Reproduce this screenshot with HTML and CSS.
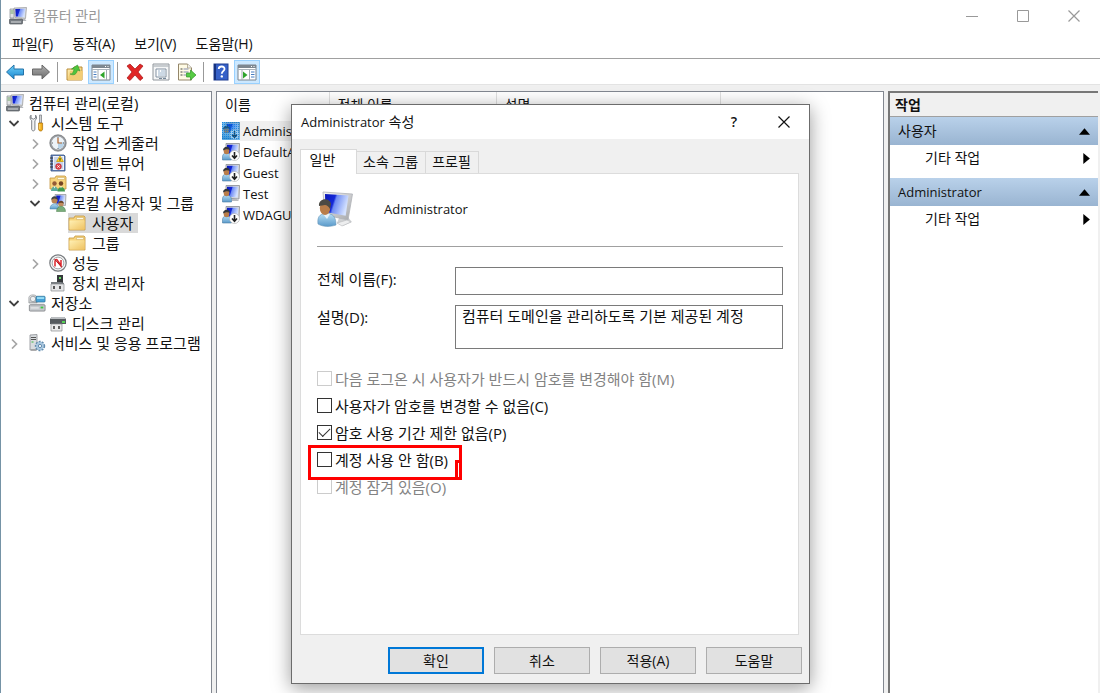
FILE: index.html
```html
<!DOCTYPE html>
<html lang="ko">
<head>
<meta charset="utf-8">
<title>컴퓨터 관리</title>
<link rel="stylesheet" href="styles.css">
</head>
<body>
<svg class="sprite" aria-hidden="true">
  <defs>
    <linearGradient id="gScreen" x1="0" y1="0" x2="1" y2="0.3"><stop offset="0" stop-color="#0a18b8"/><stop offset="0.42" stop-color="#1428d8"/><stop offset="0.5" stop-color="#6f8cf4"/><stop offset="1" stop-color="#d4e2ff"/></linearGradient>
    <linearGradient id="gBlue" x1="0" y1="0" x2="0" y2="1"><stop offset="0" stop-color="#6fd0f8"/><stop offset="1" stop-color="#1686d0"/></linearGradient>
    <linearGradient id="gGray" x1="0" y1="0" x2="0" y2="1"><stop offset="0" stop-color="#b0b0b0"/><stop offset="1" stop-color="#6c6c6c"/></linearGradient>
    <linearGradient id="gFolder" x1="0" y1="0" x2="1" y2="1"><stop offset="0" stop-color="#fff0b4"/><stop offset="1" stop-color="#efc262"/></linearGradient>
    <linearGradient id="gShirt" x1="0" y1="0" x2="0" y2="1"><stop offset="0" stop-color="#b4dcf4"/><stop offset="1" stop-color="#5a9aca"/></linearGradient>
    <linearGradient id="gMetal" x1="0" y1="0" x2="1" y2="1"><stop offset="0" stop-color="#f6f6f6"/><stop offset="1" stop-color="#a4a6aa"/></linearGradient>
  </defs>
  <symbol id="computer" viewBox="0 0 18 18">
    <path d="M1 2h4v9H1z" fill="#dfe1e4" stroke="#85898f" stroke-width=".7"/><path d="M1.500 4h3M1.500 6h3" stroke="#75a86a"/>
    <path d="M5 1l12.500-.5-1 11L6 10.500z" fill="#d5d9df" stroke="#888" stroke-width=".6"/><path d="M6.300 2l10-.3-.8 8.600-8.700-.7z" fill="url(#gScreen)"/>
    <path d="M12 12h4l1.500 2h-5z" fill="#b5b8bc"/><rect x=".5" y="12" width="13" height="5" rx=".7" fill="#777d83" stroke="#42474b" stroke-width=".6"/><path d="M3 14v2M5 14v2M7 14v2M9 14v2M11 14v2" stroke="#e4e6e8" stroke-width=".9"/>
  </symbol>
  <symbol id="tools" viewBox="0 0 16 18">
    <path d="M2 1.200C.6 2.400.7 5.500 2.700 6.500v8.500c0 2.500 3.200 2.500 3.200 0V6.500C8 5.500 8 2.500 6.600 1.200V4L4.300 5.200 2 4z" fill="#f2f3f4" stroke="#6f7479" stroke-width=".9"/>
    <path d="M10.500 1h2v8h-2z" fill="#d0d3d6" stroke="#73777b" stroke-width=".7"/><path d="M9.600 9h4v6c0 2.700-4 2.700-4 0z" fill="#f3ae1c" stroke="#a96e08" stroke-width=".7"/><path d="M10.800 10v5" stroke="#ffe07a"/>
  </symbol>
  <symbol id="clock" viewBox="0 0 18 18">
    <circle cx="9" cy="9" r="8.200" fill="#9a9da1" stroke="#6b6e72" stroke-width=".7"/><circle cx="9" cy="9" r="6.400" fill="#edf3f8"/><path d="M9 9l6-1A6 6 0 0 1 9 15z" fill="#b9d4e9"/><path d="M9 4v5h4" fill="none" stroke="#b2642a" stroke-width="1.200"/><path d="M9 3v1M9 14v1M3 9h1M14 9h1" stroke="#666"/>
  </symbol>
  <symbol id="event" viewBox="0 0 18 18">
    <path d="M2 1h13l1 1v15H2z" fill="#6a86bf" stroke="#34507f" stroke-width=".8"/><path d="M4 2h11v14H4z" fill="#f0f3fb"/><path d="M5 4h9M5 6h9M5 8h9M5 10h9M5 12h9M5 14h9" stroke="#8fa4d0" stroke-width=".8"/><path d="M1 4h3M1 7h3M1 10h3M1 13h3" stroke="#333"/>
    <path d="M11 2l3.400 5.500H7.600z" fill="#ffdc20" stroke="#c29300" stroke-width=".7"/><path d="M11 4v2M11 6.300v.7" stroke="#222"/><circle cx="9.500" cy="12.500" r="2.900" fill="#e3424a" stroke="#a81820" stroke-width=".5"/><path d="M8.400 11.400l2.200 2.200M10.600 11.400l-2.200 2.200" stroke="#fff"/>
  </symbol>
  <symbol id="folder" viewBox="0 0 18 18">
    <path d="M1 4h5l1-2h9l1 1v13H1z" fill="#f7d47c" stroke="#c4963c" stroke-width=".8"/><path d="M8.500 3.500h7v2h-7z" fill="#fffbe6" stroke="#c9a65a" stroke-width=".5"/><path d="M1.500 6.500h15V15.500h-15z" fill="url(#gFolder)"/>
  </symbol>
  <symbol id="shared" viewBox="0 0 18 18">
    <path d="M1 4h5l1-2h9l1 1v12H1z" fill="#f7d47c" stroke="#c4963c" stroke-width=".8"/><path d="M8.500 3.500h7v2h-7z" fill="#fffbe6" stroke="#c9a65a" stroke-width=".5"/><circle cx="5.500" cy="9.500" r="2.200" fill="#935b37"/><path d="M2 17c0-6 7-6 7 0z" fill="#5cab9a"/><circle cx="12" cy="9.500" r="2.200" fill="#744324"/><path d="M8.500 17.500c0-6 7.500-6 7.500 0z" fill="#3f9a50"/><path d="M4.700 12.500l.8 2 .8-2M11.200 12.500l.8 2 .8-2" fill="#fff"/>
  </symbol>
  <symbol id="users" viewBox="0 0 18 18">
    <path d="M6 .5h11l-.6 11L7 10.500z" fill="#d7d9de" stroke="#8c8f96" stroke-width=".7"/><path d="M7.200 1.600h8.700l-.5 8.600-8-.8z" fill="url(#gScreen)"/><circle cx="5.500" cy="6.500" r="3" fill="#ba8352"/><path d="M2.200 6c0-5 6.600-5 6.600 0-2-2-4-2-6.600 0z" fill="#3d4348"/><path d="M1 15c0-7 9-7 9 0z" fill="url(#gShirt)" stroke="#4780a8" stroke-width=".5"/><circle cx="12" cy="10" r="2.600" fill="#c18c60"/><path d="M9.200 9.800c0-4 5.700-4 5.700 0-2-1.500-3.700-1.500-5.700 0z" fill="#674529"/><path d="M7.500 17.500c0-7 9-7 9 0z" fill="#79ad7b" stroke="#4a7e4d" stroke-width=".5"/>
  </symbol>
  <symbol id="perf" viewBox="0 0 18 18">
    <circle cx="9" cy="9" r="8.200" fill="#f7f7f7" stroke="#777b7f" stroke-width="1.200"/><circle cx="9" cy="9" r="5.900" fill="#fff" stroke="#a0a3a6" stroke-width="1"/><path d="M6 12.500V7.500c0-2 1.500-2.500 2.500-1l3.500 5V6" fill="none" stroke="#dd242a" stroke-width="1.500"/><path d="M5.500 5l7 8" stroke="#b31a20" stroke-width="1"/>
  </symbol>
  <symbol id="device" viewBox="0 0 18 18">
    <path d="M8 1h6v8H8z" fill="#34383a"/><path d="M10 3h2v2h-2z" fill="#69d963"/><path d="M2 8h10l3 1v2H2z" fill="#777c80"/><path d="M2 10h13v7H2z" fill="#e4e5e6" stroke="#8b8e91" stroke-width=".7"/><path d="M5 12v3M11 12v3" stroke="#333" stroke-width="1.600"/>
  </symbol>
  <symbol id="storage" viewBox="0 0 20 20">
    <path d="M1 10V4c0-4 9-4 9 0v6z" fill="url(#gMetal)" stroke="#85898d" stroke-width=".7"/><circle cx="5.500" cy="5.500" r="3" fill="#eef0f1" stroke="#9da1a5"/><rect x="9" y="2.500" width="10" height="6.500" rx="1" fill="#48a2d8" stroke="#266d91" stroke-width=".7"/><path d="M10 3.500h8v2h-8z" fill="#9be0f7"/><path d="M1.500 12.500l2-2h14l2 2z" fill="#d8dadc"/><rect x="1.500" y="12" width="17.500" height="7" rx="1" fill="#c6c9cd" stroke="#73777b" stroke-width=".8"/><path d="M3 15.500h9" stroke="#f4f4f4"/><path d="M14 14h3v2h-3z" fill="#3bc641"/>
  </symbol>
  <symbol id="disk" viewBox="0 0 18 18">
    <path d="M3 3h12l2 2v5H1V5z" fill="#555a5e"/><path d="M3 3h12l2 2H1z" fill="#bbbec1"/><path d="M13 7h3v2h-3z" fill="#55d255"/><path d="M2 10h11v7H2z" fill="#ebebeb" stroke="#8b8e91" stroke-width=".7"/><path d="M5 12v3M10 12v3" stroke="#333" stroke-width="1.500"/>
  </symbol>
  <symbol id="services" viewBox="0 0 18 18">
    <path d="M2 1l7-.5V16H2z" fill="#d9dde0" stroke="#8a8e92" stroke-width=".8"/><path d="M3 3.500h5M3 5.500h5" stroke="#555"/><path d="M3.500 8h2" stroke="#38b740"/><path d="M3 16h5" stroke="#888"/><circle cx="12" cy="12" r="4.200" fill="#b6d1e7" stroke="#638cae" stroke-width="2" stroke-dasharray="1.900 1.100"/><circle cx="12" cy="12" r="3.700" fill="#a9c8e1"/><circle cx="12" cy="12" r="1.600" fill="#fff" stroke="#668cab"/>
  </symbol>
  <symbol id="person" viewBox="0 0 36 36">
    <path d="M22 27l8-2 5 6-9 4-6-3z" fill="#cfd1d3"/><path d="M6 1l29.500 2-4.500 26-23-5z" fill="url(#gMetal)" stroke="#b0b3b7" stroke-width=".8"/><path d="M8 3l23.500 1.500-2.800 20.300L8.500 21z" fill="url(#gScreen)"/><path d="M20 32l10-3 4 2-9 4z" fill="#edeeef" stroke="#b8babd" stroke-width=".6"/>
    <path d="M1 33c-1-7 2-10 6-10h5c5 0 7 5 7 11-6 2-13 2-18-1z" fill="url(#gShirt)" stroke="#6696b9" stroke-width=".6"/><path d="M6 23l4 5 3-5z" fill="#e7f2fa"/><ellipse cx="8" cy="17" rx="5.200" ry="7" fill="#b97d4a"/><path d="M2 15C1 7 13 6 14 13l-1 5c-2-3-3-4-5-4-2 0-4 1-6 1z" fill="#4c4a44"/>
  </symbol>
  <symbol id="user" viewBox="0 0 18 18">
    <path d="M4 .5h13.500L17 14l-13-1z" fill="#d4d6da" stroke="#888c92" stroke-width=".8"/><path d="M5 1.800h11.200l-.5 10.600L5 11.500z" fill="url(#gScreen)"/><path d="M10 14h5l2 2h-7z" fill="#b9bbbe"/>
    <path d="M.5 17c-.6-6 1.500-7 4-7s5.500 1 5 7z" fill="url(#gShirt)" stroke="#4c7ca2" stroke-width=".6"/><ellipse cx="4.500" cy="8" rx="2.800" ry="3.300" fill="#b97d4a"/><path d="M1 7.500c0-4.500 6.500-5 7-.5-2-1-4-1-7 .5z" fill="#33373b"/>
  </symbol>
  <symbol id="userOff" viewBox="0 0 18 18"><use href="#user" width="18" height="18"/><circle cx="12.500" cy="12.500" r="5" fill="#fff" stroke="#aaa" stroke-width=".6"/><path d="M12.500 9v6M10 12.500l2.500 2.800 2.500-2.800" fill="none" stroke="#222" stroke-width="1.600"/></symbol>
  <symbol id="userSel" viewBox="0 0 18 18"><rect width="18" height="18" fill="#b5daf5"/><use href="#userOff" width="18" height="18"/><rect width="18" height="18" fill="#0c86e0" fill-opacity=".4"/><path d="M0 .5h18M0 2.500h18M0 4.500h18M0 6.500h18M0 8.500h18M0 10.500h18M0 12.500h18M0 14.500h18M0 16.500h18" stroke="#0078d7" stroke-dasharray="1 1" stroke-opacity=".7"/></symbol>
  <symbol id="back" viewBox="0 0 20 18"><path d="M1.500 9L9 2v4h9.500v6H9v4z" fill="url(#gBlue)" stroke="#2473a8"/></symbol>
  <symbol id="forward" viewBox="0 0 20 18"><path d="M18.500 9L11 2v4H1.500v6H11v4z" fill="url(#gGray)" stroke="#666"/></symbol>
  <symbol id="up" viewBox="0 0 18 18"><path d="M1 6h6l1-2h8v13H1z" fill="url(#gFolder)" stroke="#b98c39"/><path d="M2 17L4 8h13l-1 9z" fill="#f2cd76"/><path d="M4 11c3 0 3.500-2 4-5H5.500l6-4 2.500 6-2.500-1c-1 4-3 6-7.500 4z" fill="#4fc53d" stroke="#31922a" stroke-width=".6"/></symbol>
  <symbol id="paneLeft" viewBox="0 0 20 18"><path d="M1 2h18v15H1z" fill="#fff" stroke="#7d858e"/><path d="M1 2h18v3H1z" fill="#7d8790"/><path d="M14 3.500h1M16.500 3.500h1" stroke="#fff"/><path d="M1 6.500h18" stroke="#aab3bb"/><path d="M7 7v10M15.500 7v10" stroke="#a4acb3"/><path d="M2.500 9h3M2.500 11.500h3M2.500 14h3" stroke="#477cbf"/><path d="M13.500 8.500v7L9 12z" fill="#2ea52b"/></symbol>
  <symbol id="paneRight" viewBox="0 0 20 18"><path d="M1 2h18v15H1z" fill="#fff" stroke="#7d858e"/><path d="M1 2h18v3H1z" fill="#7d8790"/><path d="M14 3.500h1M16.500 3.500h1" stroke="#fff"/><path d="M1 6.500h18" stroke="#aab3bb"/><path d="M5 7v10M12.500 7v10" stroke="#a4acb3"/><path d="M14 9h3.500M14 11.500h3.500M14 14h3.500" stroke="#477cbf"/><path d="M6 8.500v7l4.500-3.500z" fill="#2ea52b"/></symbol>
  <symbol id="delete" viewBox="0 0 18 18"><path d="M1 3l3-2 5 5 5-5 3 2-5 6 5 6-3 2.500-5-5.500-5 5.500L1 15l5-6z" fill="#e02626" stroke="#a61515" stroke-width=".7"/></symbol>
  <symbol id="props" viewBox="0 0 18 18"><path d="M1 1h16v16H1z" fill="#f5f6f7" stroke="#90969c"/><path d="M1.500 3h15" stroke="#9ba3aa"/><path d="M4 6h10v8H4z" fill="#fff" stroke="#8291a1"/><path d="M6 8h2M9 8h4M6 10h7M6 12h7" stroke="#9ab2ca"/><path d="M7 15.500h3M11 15.500h3" stroke="#789"/></symbol>
  <symbol id="export" viewBox="0 0 19 18"><path d="M1 1h9l4 4v12H1z" fill="#fffbe5" stroke="#94866a"/><path d="M10 1v4h4" fill="#eee" stroke="#94866a" stroke-width=".6"/><path d="M3 6h2M3 9h2M3 12h2" stroke="#444"/><path d="M6 6h5M6 9h5M6 12h3" stroke="#858db0"/><path d="M9 10h4V7l5.500 5-5.500 5v-3H9z" fill="#57cc45" stroke="#2f9629" stroke-width=".7"/></symbol>
  <symbol id="help" viewBox="0 0 16 18"><rect x="1" y="1" width="14" height="16" fill="#3560c8" stroke="#203f92"/><path d="M2 1v16" stroke="#16327e" stroke-width="2"/><path d="M5.700 6c.3-3.500 6.200-3.200 5.800.2-.3 2-2.700 1.900-2.700 4.500" fill="none" stroke="#fff" stroke-width="1.800"/><circle cx="8.800" cy="13.400" r="1.200" fill="#fff"/></symbol>
  <symbol id="open" viewBox="0 0 12 12"><path d="M1.500 4L6 8.500 10.500 4" fill="none" stroke="#404040" stroke-width="1.800"/></symbol>
  <symbol id="closed" viewBox="0 0 12 12"><path d="M4 2.500L8.500 7 4 11.500" fill="none" stroke="#a6a6a6" stroke-width="1.700"/></symbol>
  <symbol id="x" viewBox="0 0 12 12"><path d="M.5.5l11 11M11.500.5l-11 11" fill="none" stroke="currentColor" stroke-width="1.200"/></symbol>
  <symbol id="min" viewBox="0 0 12 12"><path d="M0 6.500h12" stroke="currentColor"/></symbol>
  <symbol id="max" viewBox="0 0 12 12"><path d="M.5.5h11v11H.5z" fill="none" stroke="currentColor"/></symbol>
  <symbol id="triUp" viewBox="0 0 10 10"><path d="M0 8l5-6 5 6z"/></symbol>
  <symbol id="triRight" viewBox="0 0 10 10"><path d="M3 0l6 5-6 5z"/></symbol>
</svg>

<div class="window">
  <header class="titlebar">
    <svg class="icon"><use href="#computer"/></svg>
    <h1 class="title">컴퓨터 관리</h1>
    <div class="captions">
      <button class="caption" aria-label="최소화"><svg><use href="#min"/></svg></button>
      <button class="caption" aria-label="최대화"><svg><use href="#max"/></svg></button>
      <button class="caption" aria-label="닫기"><svg><use href="#x"/></svg></button>
    </div>
  </header>
  <nav class="menubar">
    <button>파일(F)</button><button>동작(A)</button><button>보기(V)</button><button>도움말(H)</button>
  </nav>
  <div class="toolbar" role="toolbar">
    <button aria-label="뒤로"><svg><use href="#back"/></svg></button>
    <button aria-label="앞으로"><svg><use href="#forward"/></svg></button>
    <span class="sep"></span>
    <button aria-label="위로"><svg><use href="#up"/></svg></button>
    <button class="on" aria-label="콘솔 트리"><svg><use href="#paneLeft"/></svg></button>
    <span class="sep"></span>
    <button aria-label="삭제"><svg><use href="#delete"/></svg></button>
    <button aria-label="속성"><svg><use href="#props"/></svg></button>
    <button aria-label="내보내기"><svg><use href="#export"/></svg></button>
    <span class="sep"></span>
    <button aria-label="도움말"><svg><use href="#help"/></svg></button>
    <button class="on" aria-label="작업 창"><svg><use href="#paneRight"/></svg></button>
  </div>

  <main class="panes">
    <ul class="tree" role="tree">
      <li class="node root" role="treeitem"><svg class="icon"><use href="#computer"/></svg>컴퓨터 관리(로컬)</li>
      <li class="node" role="treeitem"><svg class="twist"><use href="#open"/></svg><svg class="icon"><use href="#tools"/></svg>시스템 도구</li>
      <li class="node l2" role="treeitem"><svg class="twist"><use href="#closed"/></svg><svg class="icon"><use href="#clock"/></svg>작업 스케줄러</li>
      <li class="node l2" role="treeitem"><svg class="twist"><use href="#closed"/></svg><svg class="icon"><use href="#event"/></svg>이벤트 뷰어</li>
      <li class="node l2" role="treeitem"><svg class="twist"><use href="#closed"/></svg><svg class="icon"><use href="#shared"/></svg>공유 폴더</li>
      <li class="node l2" role="treeitem"><svg class="twist"><use href="#open"/></svg><svg class="icon"><use href="#users"/></svg>로컬 사용자 및 그룹</li>
      <li class="node l3" role="treeitem" aria-selected="true"><span class="leaf picked"><svg class="icon"><use href="#folder"/></svg>사용자</span></li>
      <li class="node l3" role="treeitem"><span class="leaf"><svg class="icon"><use href="#folder"/></svg>그룹</span></li>
      <li class="node l2" role="treeitem"><svg class="twist"><use href="#closed"/></svg><svg class="icon"><use href="#perf"/></svg>성능</li>
      <li class="node l2" role="treeitem"><span class="twist"></span><svg class="icon"><use href="#device"/></svg>장치 관리자</li>
      <li class="node" role="treeitem"><svg class="twist"><use href="#open"/></svg><svg class="icon"><use href="#storage"/></svg>저장소</li>
      <li class="node l2" role="treeitem"><span class="twist"></span><svg class="icon"><use href="#disk"/></svg>디스크 관리</li>
      <li class="node" role="treeitem"><svg class="twist"><use href="#closed"/></svg><svg class="icon"><use href="#services"/></svg>서비스 및 응용 프로그램</li>
    </ul>

    <section class="list">
      <table class="accounts">
        <colgroup><col class="c-name"><col class="c-full"><col class="c-desc"><col></colgroup>
        <thead><tr><th>이름</th><th>전체 이름</th><th>설명</th><th></th></tr></thead>
        <tbody>
          <tr class="current"><td><span class="cell"><svg class="icon"><use href="#userSel"/></svg><span class="name">Administrator</span></span></td><td></td><td></td><td></td></tr>
          <tr><td><span class="cell"><svg class="icon"><use href="#userOff"/></svg><span class="name">DefaultAccount</span></span></td><td></td><td></td><td></td></tr>
          <tr><td><span class="cell"><svg class="icon"><use href="#userOff"/></svg><span class="name">Guest</span></span></td><td></td><td></td><td></td></tr>
          <tr><td><span class="cell"><svg class="icon"><use href="#user"/></svg><span class="name">Test</span></span></td><td></td><td></td><td></td></tr>
          <tr><td><span class="cell"><svg class="icon"><use href="#userOff"/></svg><span class="name">WDAGUtility</span></span></td><td></td><td></td><td></td></tr>
        </tbody>
      </table>
    </section>

    <aside class="actions">
      <h2 class="actions-title">작업</h2>
      <section class="group">
        <button class="group-head">사용자<svg><use href="#triUp"/></svg></button>
        <button class="action">기타 작업<svg><use href="#triRight"/></svg></button>
      </section>
      <section class="group">
        <button class="group-head latin">Administrator<svg><use href="#triUp"/></svg></button>
        <button class="action">기타 작업<svg><use href="#triRight"/></svg></button>
      </section>
    </aside>
  </main>

  <form class="dialog" role="dialog" aria-labelledby="dlg-title" onsubmit="return false">
    <header class="dialog-bar">
      <h2 id="dlg-title" class="dialog-title"><span class="latin">Administrator</span> 속성</h2>
      <button type="button" class="dialog-btn ask" aria-label="도움말">?</button>
      <button type="button" class="dialog-btn" aria-label="닫기"><svg><use href="#x"/></svg></button>
    </header>
    <div class="tabs" role="tablist">
      <button type="button" class="tab active" role="tab" aria-selected="true">일반</button>
      <button type="button" class="tab" role="tab">소속 그룹</button>
      <button type="button" class="tab" role="tab">프로필</button>
    </div>
    <div class="page" role="tabpanel">
      <div class="who"><svg class="avatar"><use href="#person"/></svg><span class="latin">Administrator</span></div>
      <div class="fields">
        <label for="fullname">전체 이름(F):</label>
        <input id="fullname" class="box" type="text">
        <label for="desc">설명(D):</label>
        <textarea id="desc" class="box area">컴퓨터 도메인을 관리하도록 기본 제공된 계정</textarea>
      </div>
      <div class="checks">
        <label class="check off"><input type="checkbox" disabled>다음 로그온 시 사용자가 반드시 암호를 변경해야 함(M)</label>
        <label class="check"><input type="checkbox">사용자가 암호를 변경할 수 없음(C)</label>
        <label class="check"><input type="checkbox" checked>암호 사용 기간 제한 없음(P)</label>
        <label class="check marked"><input type="checkbox">계정 사용 안 함(B)</label>
        <label class="check off"><input type="checkbox" disabled>계정 잠겨 있음(O)</label>
      </div>
    </div>
    <footer class="buttons">
      <button class="push primary">확인</button>
      <button type="button" class="push">취소</button>
      <button type="button" class="push">적용(A)</button>
      <button type="button" class="push">도움말</button>
    </footer>
  </form>
</div>
</body>
</html>
```

FILE: styles.css
```css
*, *::before, *::after { box-sizing: border-box; }
body {
  margin: 0;
  font: 14px/20px "Open Sans", "Noto Sans CJK KR", sans-serif;
  color: #111;
  background: #f0f0f0;
}
button, input, textarea { font: inherit; color: inherit; margin: 0; }
button { border: 0; padding: 0; background: none; }
h1, h2, ul { margin: 0; padding: 0; font: inherit; }
.sprite { position: absolute; width: 0; height: 0; }
.icon { width: 18px; height: 18px; flex: none; }
.latin { font-size: 13px; }

.window {
  position: relative;
  display: flex;
  flex-direction: column;
  min-height: 100vh;
  border-left: 1px solid #7593a6;
  overflow: hidden;
}
.titlebar { display: flex; align-items: center; height: 31px; padding: 0 1px 0 8px; background: #fff; }
.title { margin-left: 6px; color: #999; }
.captions { display: flex; margin-left: auto; }
.caption { display: grid; place-items: center; width: 51px; height: 31px; color: #999; }
.caption svg, .dialog-btn svg { width: 12px; height: 12px; }
.menubar { display: flex; gap: 19px; height: 28px; padding: 0 11px 1px; background: #fff; border-bottom: 1px solid #a0a0a0; }
.toolbar { display: flex; align-items: center; height: 26px; padding-left: 1px; background: #fff; border-bottom: 1px solid #e3e3e3; }
.toolbar button { display: grid; place-items: center; width: 26px; height: 24px; }
.toolbar svg { width: 20px; height: 18px; }
.toolbar .on { background: #cce8ff; border: 1px solid #99d1ff; }
.sep { width: 1px; height: 20px; margin: 0 4px 0 3px; background: #999; }

.panes {
  flex: 1;
  display: grid;
  grid-template-columns: 211px 1fr 210px;
  gap: 4px;
  padding: 6px 2px 0 0;
}
.tree, .list { background: #fff; border: 1px solid #828790; border-bottom: 0; }
.tree { padding: 1px 0; border-left: 0; list-style: none; font-size: 15px; }
.node { display: flex; align-items: center; height: 20px; padding-left: 7px; white-space: nowrap; }
.node .icon { margin-right: 5px; }
.node.root { padding-left: 5px; }
.l2 { padding-left: 28px; }
.twist { width: 12px; height: 12px; margin-right: 8px; flex: none; }
.l3 { padding-left: 67px; }
.leaf { display: flex; align-items: center; gap: 1px; height: 20px; padding-right: 5px; }
.picked { background: #d9d9d9; }

.accounts { width: 100%; table-layout: fixed; border-collapse: collapse; }
.c-name { width: 112px; }
.c-full { width: 167px; }
.c-desc { width: 224px; }
.accounts th { height: 28px; padding: 0 0 2px 8px; font-weight: 400; text-align: left; border-right: 1px solid #e0e0e0; }
.accounts th:last-child { border-right: 0; }
.accounts td { height: 21px; padding: 0; }
.cell { display: flex; align-items: center; height: 21px; padding-left: 5px; font-size: 13px; white-space: nowrap; }
.name { flex: 1; padding-left: 3px; overflow: hidden; }
.current .name { background: #f0f0f0; }

.actions { background: #fff; border: 2px solid #777; border-width: 2px 0 0 2px; }
.actions-title { height: 24px; padding-left: 5px; line-height: 24px; font-weight: 700; background: #f0f0f0; border-bottom: 1px solid #a0a0a0; }
.group { margin-bottom: 5px; }
.group-head, .action { display: flex; align-items: center; justify-content: space-between; width: 100%; padding: 0 8px; }
.group-head { height: 28px; background: linear-gradient(#b9d1ea, #99b4d1); }
.action { height: 28px; padding: 0 7px 2px 35px; }
.actions svg { width: 11px; height: 11px; }

.dialog {
  position: absolute;
  left: 290px;
  top: 104px;
  display: flex;
  flex-direction: column;
  width: 519px;
  height: 580px;
  padding: 0 10px 9px 8px;
  background: #f0f0f0;
  border: 1px solid #6c6c6c;
  box-shadow: 0 4px 18px rgba(0, 0, 0, 0.4);
}
.dialog-bar { display: flex; align-items: center; height: 34px; margin: 0 -10px 10px -8px; padding-left: 9px; background: #fff; }
.dialog-title { flex: 1; }
.dialog-btn { display: grid; place-items: center; width: 50px; height: 34px; }
.ask { font-weight: 600; }
.tabs { display: flex; align-items: flex-end; }
.tab { height: 22px; padding: 0 7px 2px 6px; border: 1px solid #d9d9d9; border-width: 1px 1px 0 0; }
.tab.active { position: relative; width: 57px; height: 25px; margin-bottom: -1px; padding: 0 12px 4px 0; background: #fff; border-left-width: 1px; }
.page { flex: 1; padding: 16px 15px 0 16px; background: #fff; border: 1px solid #dcdcdc; }
.who { display: flex; align-items: center; gap: 31px; height: 57px; padding-bottom: 19px; border-bottom: 1px solid #a0a0a0; }
.avatar { width: 36px; height: 36px; }
.fields { display: grid; grid-template-columns: 138px 1fr; gap: 10px 0; margin-top: 20px; font-size: 15px; }
.fields label { padding-top: 2px; }
.box { display: block; width: 100%; height: 28px; padding: 0 6px; background: #fff; border: 1px solid #7a7a7a; border-radius: 0; outline: 0; }
.area { height: 44px; resize: none; overflow: hidden; }
.checks { display: flex; flex-direction: column; align-items: flex-start; margin-top: 16px; font-size: 15px; }
.check { position: relative; display: flex; align-items: center; gap: 3px; height: 27px; }
.check input { appearance: none; display: grid; place-items: center; width: 15px; height: 15px; background: #fff; border: 1px solid #333; }
.check input:checked::after { content: ""; width: 11px; height: 6px; margin-bottom: 3px; border: solid #333; border-width: 0 0 1px 1px; rotate: -45deg; }
.off { color: #838383; }
.off input { border-color: #ccc; }
.marked::before { content: ""; position: absolute; z-index: 1; left: -9px; right: -14px; top: -1px; height: 35px; border: 3px solid #f00; }
.marked::after { content: ""; position: absolute; z-index: 1; right: -14px; top: 14px; width: 7px; height: 20px; border: 3px solid #f00; }
.buttons { display: flex; justify-content: flex-end; gap: 10px; margin: 12px -3px 0 0; }
.push { width: 96px; height: 27px; background: #e1e1e1; border: 1px solid #adadad; }
.primary { border: 2px solid #0078d7; }
```
